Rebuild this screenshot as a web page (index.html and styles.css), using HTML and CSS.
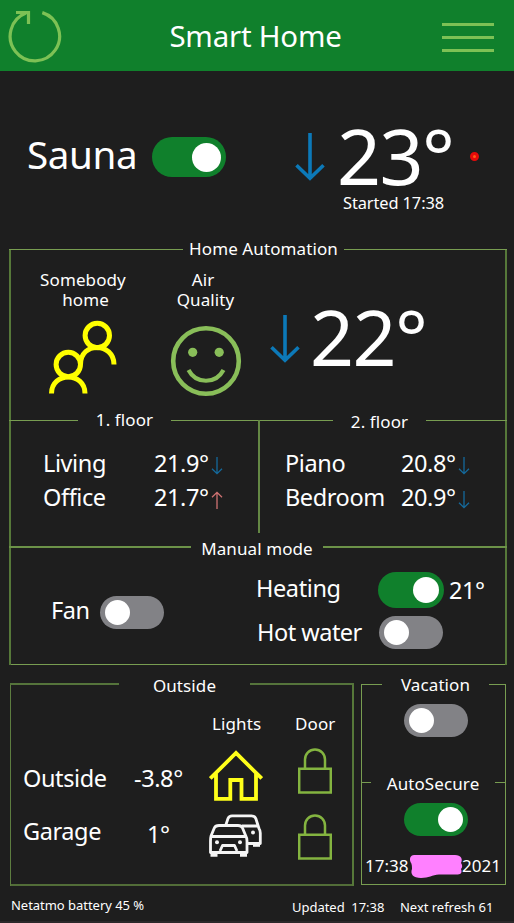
FILE: index.html
```html
<!DOCTYPE html>
<html lang="en">
<head>
<meta charset="utf-8">
<title>Smart Home</title>
<link rel="stylesheet" href="styles.css">
</head>
<body>
<svg class="defs" width="0" height="0" aria-hidden="true">
  <symbol id="arrow-big" viewBox="0 0 30 48"><path d="M15 0V46M1.5 32.3L15 45.2L28.500 32.300" fill="none" stroke="currentColor" stroke-width="3.6"/></symbol>
  <symbol id="arrow-small" viewBox="0 0 12 18"><path d="M6 0V17M1 11.800L6 16.700L11 11.800" fill="none" stroke="currentColor" stroke-width="1.300"/></symbol>
  <symbol id="lock" viewBox="0 0 34 46"><path d="M1.200 20.700H32.800V44.500H1.200ZM7 20.500V11.500A10 10 0 0 1 27 11.500V20.500" fill="none" stroke="currentColor" stroke-width="2.500"/></symbol>
</svg>

<header class="topbar">
  <svg class="refresh" width="54" height="56" viewBox="0 0 54 56"><path d="M34.300 4.600A24.700 24.700 0 1 1 18 5.100M8 4.500H19.800M20.500 3V16" fill="none" stroke="currentColor" stroke-width="3.200"/></svg>
  <h1>Smart Home</h1>
  <div class="menu"><i></i><i></i><i></i></div>
</header>

<section class="sauna">
  <span class="sauna-name">Sauna</span>
  <span class="toggle large on"></span>
  <svg class="arrow" width="30" height="48"><use href="#arrow-big"/></svg>
  <div class="sauna-temp">
    <div class="huge">23°</div>
    <div class="started">Started 17:38</div>
  </div>
  <span class="status-dot"></span>
</section>

<section class="home">
  <div class="rule r-home"><i></i><h2>Home Automation</h2><i></i></div>
  <div class="overview">
    <div class="presence">
      <p>Somebody<br><span class="second">home</span></p>
      <svg width="68" height="74" viewBox="0 0 68 74" fill="none" stroke="#ffff00" stroke-width="5"><circle cx="48.300" cy="15.500" r="12.200"/><circle cx="19.300" cy="44.500" r="12.200"/><path d="M2.500 73.500C2.500 51.500 36 51.500 36 73.500M31.500 44.500C31.500 21 65 22.500 65 44.500"/></svg>
    </div>
    <div class="air">
      <p>Air<br><span class="second">Quality</span></p>
      <svg width="72" height="72" viewBox="0 0 72 72"><circle cx="36" cy="36" r="32.800" fill="none" stroke="currentColor" stroke-width="4.600"/><circle cx="22.700" cy="27.300" r="4.600" fill="currentColor"/><circle cx="49.200" cy="27.300" r="4.600" fill="currentColor"/><path d="M18.500 45C26 59.300 46 59.300 53.500 45" fill="none" stroke="currentColor" stroke-width="4.200"/></svg>
    </div>
    <svg class="arrow" width="30" height="48"><use href="#arrow-big"/></svg>
    <div class="huge">22°</div>
  </div>
  <div class="floors">
    <div class="floor first">
      <div class="rule r-f1"><i></i><h2>1. floor</h2><i></i></div>
      <div class="room"><span>Living</span><b>21.9°</b><svg class="down" width="12" height="18"><use href="#arrow-small"/></svg></div>
      <div class="room"><span>Office</span><b>21.7°</b><svg class="up" width="12" height="18"><use href="#arrow-small"/></svg></div>
    </div>
    <div class="divider"></div>
    <div class="floor second-floor">
      <div class="rule r-f2"><i></i><h2>2. floor</h2><i></i></div>
      <div class="room"><span>Piano</span><b>20.8°</b><svg class="down" width="12" height="18"><use href="#arrow-small"/></svg></div>
      <div class="room"><span>Bedroom</span><b>20.9°</b><svg class="down" width="12" height="18"><use href="#arrow-small"/></svg></div>
    </div>
  </div>
  <div class="rule r-manual"><i></i><h2>Manual mode</h2><i></i></div>
  <div class="manual">
    <div class="fan"><span>Fan</span><span class="toggle"></span></div>
    <div class="heat">
      <div class="heating"><span class="name">Heating</span><span class="toggle medium on"></span><span class="target">21°</span></div>
      <div class="water"><span class="name">Hot water</span><span class="toggle"></span></div>
    </div>
  </div>
</section>

<div class="bottom">
  <section class="outside">
    <div class="rule r-out"><i></i><h2>Outside</h2><i></i></div>
    <div class="outside-grid">
      <span class="head lights">Lights</span><span class="head door">Door</span>
      <span class="place">Outside</span><span class="deg">-3.8°</span>
      <svg class="house" width="54" height="52" viewBox="0 0 54 52" fill="none" stroke="#ffff1a" stroke-width="3.800"><path d="M1.300 28.500L27 3L52.700 28.500M7 23V48.800H21.300V30H32.500V48.800H47V23"/></svg>
      <svg class="lock l1" width="34" height="46"><use href="#lock"/></svg>
      <span class="place garage">Garage</span><span class="deg garage-deg">1°</span>
      <svg class="cars" width="53" height="44" viewBox="0 0 53 44" fill="none" stroke="#f5f5f5" stroke-width="2.800" stroke-linejoin="round">
        <path d="M17 10.500L19 4.500Q20 1.800 23 1.800H42.500Q45.800 1.800 46.800 4.500L50 14.500Q51.300 16.500 51.300 19V29.500H38M33 12H49"/>
        <path d="M44 30.800H51" stroke-width="4"/>
        <path d="M2 22L5.300 14Q6.500 11.500 10 11.500H29Q32.500 11.500 33.500 14L36.800 22Q38 24 38 27V38.500H1.500V27Q1.500 24 2 22ZM3 22.500H36.500M11 37L13.500 31.500H25.500L28 37"/>
        <path d="M1.500 40.500H8.500M31 40.500H38" stroke-width="4.600"/>
        <circle cx="8" cy="28.200" r="2" fill="#f5f5f5" stroke="none"/><circle cx="31" cy="28.200" r="2" fill="#f5f5f5" stroke="none"/><circle cx="44" cy="18.500" r="2" fill="#f5f5f5" stroke="none"/>
      </svg>
      <svg class="lock l2" width="34" height="46"><use href="#lock"/></svg>
    </div>
  </section>
  <section class="secure">
    <div class="rule r-vac"><i></i><h2>Vacation</h2><i></i></div>
    <span class="toggle vac"></span>
    <div class="rule r-auto"><i></i><h2>AutoSecure</h2><i></i></div>
    <span class="toggle on auto"></span>
    <div class="stamp"><span>17:38</span><svg width="54" height="25" viewBox="0 0 54 25"><path d="M5 1H46C52 1 54 5 52 9C54 12 53 14 52 15C54 20 50 21 46 20.500H30C23 21 20 24 12 24C4 24 1 20 3 15C3 12 3 10 1.500 8C0 4 2 1 5 1Z" fill="#ff80ff"/></svg><span>2021</span></div>
  </section>
</div>

<footer class="footer"><span class="battery">Netatmo battery 45 %</span><span class="updated">Updated&nbsp; 17:38</span><span class="next">Next refresh 61</span></footer>
</body>
</html>
```
FILE: styles.css
```css
* { box-sizing: border-box; }
html { background: #1e1e1e; }
body {
  margin: 0;
  width: 514px;
  height: 923px;
  overflow: hidden;
  background: #1e1e1e;
  border-bottom: 2px solid #2b282a;
  color: #fff;
  font-family: "Noto Sans", "Open Sans", sans-serif;
  font-size: 23.5px;
  letter-spacing: -.4px;
  white-space: nowrap;
}
.defs { display: block; position: absolute; }
svg { display: block; flex: none; }
h1, h2, p { margin: 0; font-weight: 400; }
h2, p, .head { font-size: 17px; line-height: 20px; letter-spacing: .1px; }

.topbar {
  display: flex;
  align-items: center;
  justify-content: space-between;
  height: 71px;
  padding: 0 20px 0 8px;
  background: #10802c;
  color: #7dc155;
}
.topbar h1 { color: #fff; font-size: 29.400px; line-height: 40px; letter-spacing: -.2px; margin-left: 7px; }
.menu { display: grid; gap: 10px; width: 52px; margin-top: 3px; }
.menu i { height: 3px; background: #7dc155; }

.toggle {
  display: flex;
  align-items: center;
  flex: none;
  width: 64px;
  height: 33px;
  padding: 0 5px;
  border-radius: 17px;
  background: #828286;
}
.toggle::before { content: ""; width: 25px; height: 25px; border-radius: 50%; background: #fff; }
.toggle.on { background: #10802c; justify-content: flex-end; }
.toggle.medium { width: 66px; height: 36px; border-radius: 18px; }
.toggle.medium::before { width: 26px; height: 26px; }
.toggle.large { width: 74px; height: 40px; border-radius: 20px; }
.toggle.large::before { width: 29px; height: 29px; }

.sauna { display: flex; align-items: flex-start; height: 168px; padding: 54px 0 0 27px; }
.sauna-name { width: 125px; font-size: 38.600px; line-height: 60px; margin-top: -1px; }
.sauna .toggle { margin-top: 12px; }
.arrow { color: #0c79b8; }
.sauna .arrow { margin: 8px 0 0 69px; }
.huge { font-size: 77px; line-height: 60px; letter-spacing: -1.500px; }
.sauna-temp { width: 133px; margin: 1px 0 0 12px; }
.started { font-size: 16.400px; line-height: 20px; letter-spacing: -.1px; margin: 7px 0 0 6px; }
.status-dot { width: 9px; height: 9px; margin: 27px 0 0; border-radius: 50%; background: #ff5a1a; border: 3px solid #e60a0a; }

.rule { display: grid; align-items: center; height: 20px; }
.rule i { height: 1px; background: #789d51; }
.rule h2 { text-align: center; }

.home {
  width: 498px;
  height: 426px;
  margin-left: 9px;
  background: linear-gradient(#567839, #567839) left bottom / 2px 416px no-repeat,
              linear-gradient(#567839, #567839) right bottom / 2px 416px no-repeat,
              linear-gradient(#789d51, #789d51) left bottom / 100% 1px no-repeat;
}
.r-home { grid-template-columns: 174px 161px 163px; }
.overview { display: flex; height: 151px; }
.presence { width: 86px; margin: 11px 0 0 31px; text-align: center; }
.presence .second { padding-left: 5px; }
.presence svg { margin: 10px 0 0 9px; }
.air { width: 72px; margin: 11px 0 0 44px; text-align: center; color: #89be59; }
.air p { color: #fff; padding-right: 6px; }
.air .second { padding-left: 5px; }
.air svg { margin-top: 15px; }
.overview .arrow { margin: 56px 0 0 28px; }
.overview .huge { margin: 48px 0 0 10px; }

.floors { display: grid; grid-template-columns: 249px 2px 247px; height: 127px; }
.divider { background: #648744; height: 113px; margin-top: 10px; }
.rule.r-f1 { grid-template-columns: 69px 93px 87px; margin-bottom: 16px; }
.rule.r-f2 { grid-template-columns: 73px 93px 81px; margin-bottom: 16px; }
.r-f2 h2, .r-manual h2 { margin: 2px 0 -2px; }
.room { display: flex; align-items: center; height: 34px; line-height: 34px; }
.room b { font-weight: 400; width: 57px; }
.first .room { padding-left: 34px; }
.first .room span { width: 111px; }
.second-floor .room { padding-left: 25px; }
.second-floor .room span { width: 116px; }
.room svg { margin-top: 5px; }
.down { color: #15699b; }
.up { color: #cf7272; transform: rotate(180deg); }

.r-manual { grid-template-columns: 182px 132px 184px; }
.r-manual i { height: 2px; background: #6c9248; }
.manual { display: flex; line-height: 34px; }
.fan { display: flex; margin: 36px 0 0 42px; }
.fan span:first-child { width: 49px; }
.fan .toggle { margin-top: 3px; }
.heat { margin: 15px 0 0 92px; }
.heating { display: flex; height: 44px; }
.heating .name { width: 122px; margin-top: -1px; }
.heating .target { margin: 1px 0 0 5px; }
.water { display: flex; padding-left: 1px; }
.water .name { width: 122px; margin-top: -1px; letter-spacing: -.5px; }

.bottom { display: flex; gap: 7px; padding: 9px 0 0 10px; }
.outside {
  width: 344px;
  height: 212px;
  background: linear-gradient(#5d7d40, #5d7d40) left bottom / 1px 202px no-repeat,
              linear-gradient(#567839, #567839) right bottom / 2px 202px no-repeat,
              linear-gradient(#526d38, #526d38) left bottom / 100% 2px no-repeat;
}
.r-out { grid-template-columns: 109px 131px 104px; }
.r-out i { height: 2px; background: #55743b; }
.r-vac h2 { margin: 1px 0 -1px; }
.r-out h2, .r-auto h2 { margin: 2px 0 -2px; }
.outside-grid {
  display: grid;
  grid-template-columns: 110px 79px 85px 45px;
  grid-template-rows: 56px 66px 60px;
  align-items: start;
  padding-left: 13px;
  line-height: 34px;
}
.head { margin-top: 20px; }
.lights { grid-column: 3; }
.door { margin-left: -2px; }
.deg { padding-left: 1px; }
.place, .deg { margin-top: 11px; }
.house { margin-left: -3px; }
.l1 { margin-top: -2px; }
.garage { margin-top: -2px; }
.garage-deg { margin-top: 1px; padding-left: 14px; }
.cars { margin: -2px 0 0 -3px; }
.l2 { margin-top: -2px; }
.lock { margin-left: 1px; color: #84b440; }

.secure {
  width: 145px;
  height: 211px;
  background: linear-gradient(#789d51, #789d51) left bottom / 1px 201px no-repeat,
              linear-gradient(#789d51, #789d51) right bottom / 1px 201px no-repeat,
              linear-gradient(#789d51, #789d51) left bottom / 100% 1px no-repeat;
}
.r-vac { grid-template-columns: 21px 107px 17px; }
.r-auto { grid-template-columns: 10px 124px 11px; margin-top: 35px; }
.toggle.vac { margin: 10px 0 0 43px; }
.toggle.auto { margin: 11px 0 0 43px; }
.stamp { display: flex; align-items: center; margin: 18px 0 0 4px; font-size: 17px; line-height: 23px; letter-spacing: 0; }
.stamp svg { margin-right: -1px; }
.stamp span { margin-bottom: 2px; }
.stamp span:first-child { width: 44px; }

.footer { display: flex; font-size: 13px; line-height: 18px; letter-spacing: -.03px; padding: 10px 0 0 11px; }
.battery { width: 281px; }
.updated { width: 108px; margin-top: 2px; }
.next { margin-top: 2px; }
```
